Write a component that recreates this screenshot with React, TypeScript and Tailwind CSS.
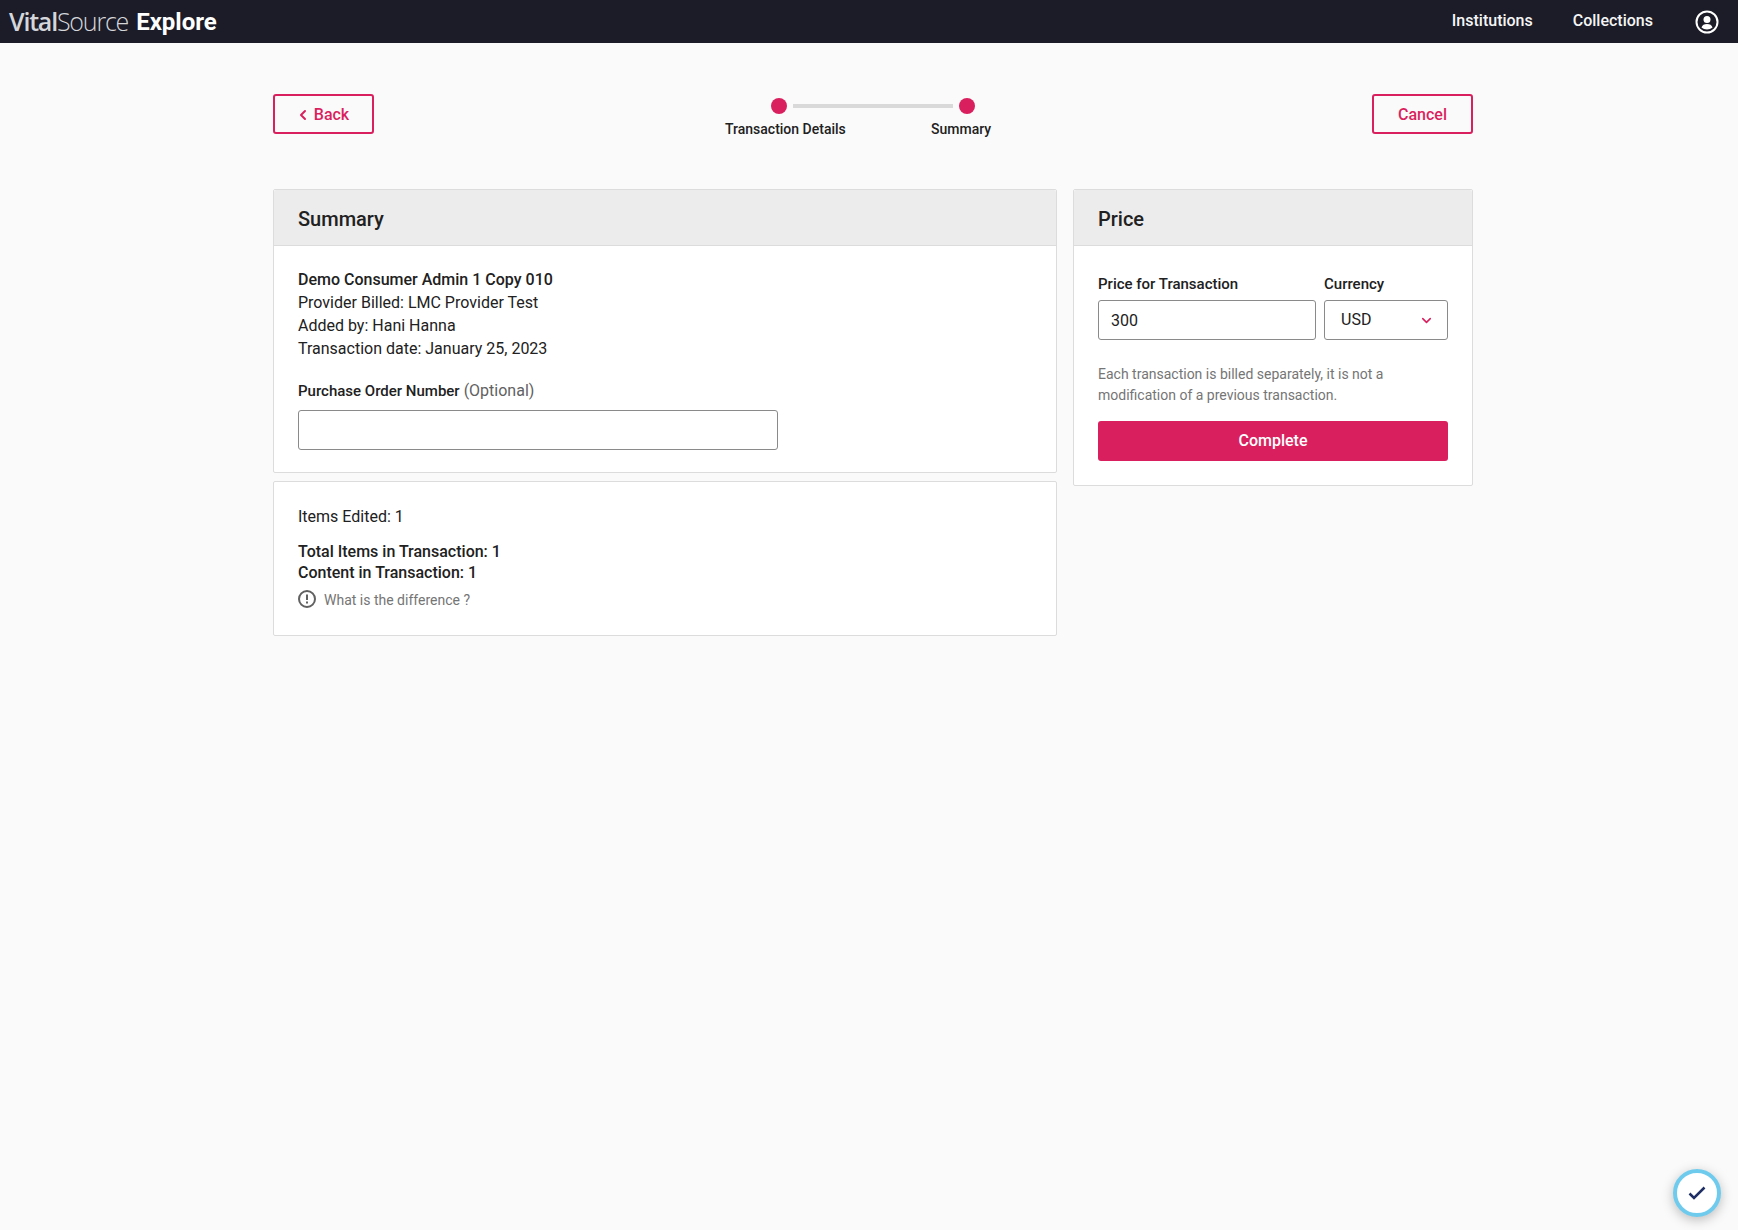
import { ChevronDown, ChevronLeft } from "lucide-react"

const Steps = () => (
    <div className="relative h-[40px] w-[300px] text-[14px] font-medium text-[#212121]">
        <div className="absolute left-[48px] top-[-1px] h-4 w-4 rounded-full bg-[#da1f5e]" />
        <div className="absolute left-[70px] top-[5px] h-[4px] w-[160px] bg-[#d9d9d9]" />
        <div className="absolute left-[236px] top-[-1px] h-4 w-4 rounded-full bg-[#da1f5e]" />
        <span className="absolute left-[2px] top-[20px] whitespace-nowrap">Transaction Details</span>
        <span className="absolute left-[208px] top-[20px] whitespace-nowrap">Summary</span>
    </div>
)

const PanelHeader = ({ title }: { title: string }) => (
    <div className="flex h-[56px] items-center rounded-t-[2px] border-b border-[#dcdcdc] bg-[#ececec] px-6 pt-[2px] text-[20px] font-medium text-[#212121]">
        {title}
    </div>
)

export default function App() {
    return (
        <div className="min-h-[1230px] bg-[#fafafa] font-['Roboto',sans-serif] text-[16px] text-[#212121]">
            <header className="flex h-[43px] items-center justify-between bg-[#1b1c28] pl-[9px] pr-[19px] text-white">
                <div className="flex items-center">
                    <span className="font-['Open_Sans',sans-serif] text-[25px] tracking-[-1.2px] text-[#d5d6da]">
                        <span className="font-semibold">Vital</span>
                        <span className="font-light">Source</span>
                    </span>
                    <span className="ml-[8px] text-[24px] font-bold">Explore</span>
                </div>
                <nav className="flex items-center text-[16px] font-medium text-[#f5f5f5]">
                    <span className="pb-[2px]">Institutions</span>
                    <span className="ml-10 pb-[2px]">Collections</span>
                    <svg className="ml-[42px]" width="24" height="24" viewBox="0 0 24 24" fill="none">
                        <circle cx="12" cy="12" r="10.5" stroke="white" strokeWidth="2" />
                        <circle cx="12" cy="9.5" r="3.5" fill="white" />
                        <path d="M6.5 17.5c.6-2.4 2.8-3.5 5.5-3.5s4.9 1.100 5.500 3.500c-1.500 1.300-3.400 2-5.500 2s-4-.7-5.500-2z" fill="white" />
                    </svg>
                </nav>
            </header>

            <main className="ml-[273px] w-[1200px]">
                <div className="flex items-start justify-between pt-[51px]">
                    <button className="flex h-10 w-[101px] items-center justify-center rounded-[3px] border-2 border-[#da1f5e] pr-[3px] pt-[1px] font-medium text-[#da1f5e]">
                        <ChevronLeft size={16} strokeWidth={3} className="mr-[3px]" />
                        Back
                    </button>
                    <div className="pt-[5px]">
                        <Steps />
                    </div>
                    <button className="flex h-10 w-[101px] items-center justify-center rounded-[3px] border-2 border-[#da1f5e] pt-[1px] font-medium text-[#da1f5e]">
                        Cancel
                    </button>
                </div>

                <div className="mt-[50px] flex items-start gap-4">
                    <div className="flex w-[784px] flex-col gap-2">
                        <section className="rounded-[2px] border border-[#dcdcdc] bg-white">
                            <PanelHeader title="Summary" />
                            <div className="px-6 pb-[22px] pt-[22px] leading-[23px]">
                                <p className="font-medium">Demo Consumer Admin 1 Copy 010</p>
                                <p>Provider Billed: LMC Provider Test</p>
                                <p>Added by: Hani Hanna</p>
                                <p>Transaction date: January 25, 2023</p>
                                <p className="mt-[19px]">
                                    <span className="text-[15px] font-medium">Purchase Order Number</span>{" "}
                                    <span className="text-[#616161]">(Optional)</span>
                                </p>
                                <input className="mt-[7px] block h-10 w-[480px] rounded-[3px] border border-[#8a8a8a] bg-white px-3" />
                            </div>
                        </section>
                        <section className="h-[155px] rounded-[2px] border border-[#dcdcdc] bg-white px-6 pt-[24px]">
                            <p className="leading-[21px]">Items Edited: 1</p>
                            <p className="mt-[14px] font-medium leading-[21px]">Total Items in Transaction: 1</p>
                            <p className="font-medium leading-[21px]">Content in Transaction: 1</p>
                            <div className="mt-[7px] flex items-start text-[14px] text-[#757575]">
                                <svg width="18" height="18" viewBox="0 0 18 18" fill="none">
                                    <circle cx="9" cy="9" r="8" stroke="#616161" strokeWidth="2" />
                                    <path d="M9 4.500v5.500M9 11.500v2" stroke="#616161" strokeWidth="2" />
                                </svg>
                                <span className="ml-2 mt-[1px] leading-[18px]">What is the difference ?</span>
                            </div>
                        </section>
                    </div>

                    <section className="w-[400px] rounded-[2px] border border-[#dcdcdc] bg-white">
                        <PanelHeader title="Price" />
                        <div className="px-6 pb-6 pt-[29px]">
                            <div className="flex gap-2">
                                <div className="w-[218px]">
                                    <div className="text-[15px] font-medium leading-[18px]">Price for Transaction</div>
                                    <div className="mt-[7px] flex h-10 items-center rounded-[3px] border border-[#8a8a8a] bg-white px-3 pt-[1px]">300</div>
                                </div>
                                <div className="w-[124px]">
                                    <div className="text-[15px] font-medium leading-[18px]">Currency</div>
                                    <div className="mt-[7px] flex h-10 items-center justify-between rounded-[3px] border border-[#8a8a8a] bg-white pl-4 pr-[13px]">
                                        USD
                                        <ChevronDown size={15} strokeWidth={2.500} className="text-[#da1f5e]" />
                                    </div>
                                </div>
                            </div>
                            <p className="mt-[24px] text-[14px] leading-[21px] text-[#757575]">
                                Each transaction is billed separately, it is not a modification of a previous transaction.
                            </p>
                            <button className="mt-[15px] h-10 w-full rounded-[3px] bg-[#da1f5e] font-medium text-white">
                                Complete
                            </button>
                        </div>
                    </section>
                </div>
            </main>

            <div className="fixed bottom-[13px] right-[17px] flex h-12 w-12 items-center justify-center rounded-full border-4 border-[#6fcbed] bg-white shadow-[0_3px_12px_rgba(0,0,0,0.25)]">
                <svg width="18" height="14" viewBox="0 0 18 14" fill="none">
                    <path d="M1.500 7.500L6 12L16.500 1.500" stroke="#1f2f66" strokeWidth="2.500" />
                </svg>
            </div>
        </div>
    )
}
